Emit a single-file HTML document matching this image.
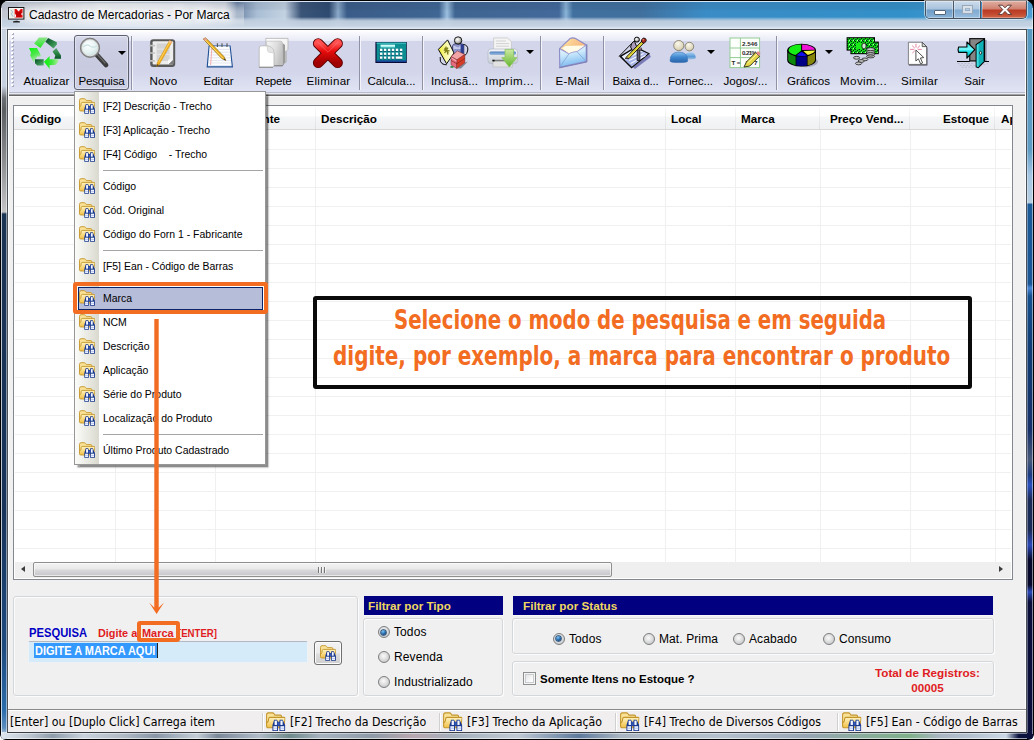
<!DOCTYPE html>
<html lang="pt-BR">
<head>
<meta charset="utf-8">
<title>Cadastro de Mercadorias - Por Marca</title>
<style>
*,*::before,*::after{box-sizing:border-box;margin:0;padding:0}
html,body{width:1034px;height:740px;overflow:hidden;background:#fff}
body{position:relative;font-family:"Liberation Sans",sans-serif;font-size:12px;color:#000}
.abs{position:absolute}
/* ---------- window frame ---------- */
#frame{position:absolute;left:0;top:0;width:1034px;height:740px;border-radius:8px 8px 6px 6px;background:#000;overflow:hidden}
#glass{position:absolute;left:1px;top:1px;right:1px;bottom:1px;border-radius:7px 7px 5px 5px;
 background:linear-gradient(90deg,#c2c7d2 0,#c9ced8 60px,#ccd2dc 224px,#6a82a4 236px,#a9bed4 256px,#c3d2e2 284px,#3a5478 300px,#2e4a70 328px,#8aa8c8 337px,#3a5c88 346px,#3f6694 438px,#9cc0e0 446px,#3f6592 454px,#42699a 558px,#8ab4d8 565px,#41709f 572px,#40709e 640px,#3a8cc6 705px,#3390c8 900px,#4d9fd6 1032px)}
#glasstop{position:absolute;left:1px;top:1px;right:1px;height:28px;border-radius:7px 7px 0 0;
 background:linear-gradient(180deg,rgba(225,236,248,.95) 0,rgba(225,236,248,.95) 1px,rgba(30,40,60,.1) 1px,rgba(30,40,60,.07) 8px,rgba(255,255,255,0) 10px,rgba(255,255,255,0) 16px,rgba(200,214,230,.55) 18px,rgba(194,208,224,.95) 20px,rgba(200,213,228,.97) 25px,rgba(226,235,245,1) 28px)}
#lframe{position:absolute;left:1px;top:30px;width:7px;bottom:1px;
 background:linear-gradient(180deg,#c9d2e1 0,#c6d0e0 56px,#9ea4ae 62px,#6c7076 68px,#5a5d62 80px,#8a8c90 130px,#c4c4c6 182px,#1a3454 184px,#17335a 480px,#1d4b80 620px,#2a6cab 680px,#5e8fbe 698px,#c9d6e4 706px)}
#rframe{position:absolute;right:1px;top:30px;width:7px;bottom:1px;
 background:linear-gradient(180deg,#5a9ac0 0,#5f9cc4 120px,#a4c6e4 145px,#b6cee0 173px,#1a5a98 174px,#1b5596 254px,#4a88d8 258px,#15508f 266px,#103c74 320px,#16306a 400px,#47587a 430px,#1a3a80 445px,#2a50c0 455px,#1a2a58 470px,#1a2a58 500px,#2a48b8 515px,#05082a 530px,#05082a 555px,#2a48b8 562px,#0a0e3a 572px,#0a0e3a 705px)}
#bframe{position:absolute;left:1px;right:1px;bottom:1px;height:7px;border-radius:0 0 5px 5px;
 background:linear-gradient(90deg,#dfe6ee 0,#b9c3cd 3%,#8e9caa 5%,#c9d3dd 8%,#aeb9c4 12%,#8896a6 15%,#c4ced8 19%,#7a8898 21%,#b0bcc8 25%,#6f8a8c 28%,#a8b4c0 31%,#8f9aa8 36%,#b8a8b0 40%,#a4b0bc 44%,#c0cad4 50%,#5f7a9c 56%,#a9b5c1 60%,#b5c1cd 70%,#98a6b4 78%,#7fb08a 88%,#aab6c2 91%,#b4c2d0 94%,#cbd8e6 97.4%,#0d1440 98.6%,#0a0e3a 100%)}
.hl{position:absolute;background:rgba(255,255,255,.75)}
#client{position:absolute;left:8px;top:30px;width:1018px;height:702px;background:#f0f0f0;box-shadow:inset 1px 0 0 #fbfcff,inset -1px 0 0 #fbfcff}
#cborder{position:absolute;left:7px;top:29px;width:1020px;height:704px;border:1px solid #4b5057;border-bottom-color:#3b3f46}
/* ---------- title bar ---------- */
#title{position:absolute;left:29px;top:7px;font-size:12px;line-height:16px;white-space:nowrap;color:#000;text-shadow:0 0 5px #fff,0 0 9px #fff,0 0 13px #fff,0 0 16px rgba(255,255,255,.9)}
#thaze{position:absolute;left:18px;top:3px;width:226px;height:24px;background:radial-gradient(ellipse at 50% 50%,rgba(255,255,255,.7) 0,rgba(255,255,255,.5) 60%,rgba(255,255,255,0) 100%)}
#capbtns{position:absolute;left:925px;top:1px;width:102px;height:18px;border:1px solid #46505e;border-top:none;border-radius:0 0 5px 5px;overflow:hidden;box-shadow:0 0 0 1px rgba(255,255,255,.55)}
#capbtns div{position:absolute;top:0;height:17px}
/* ---------- toolbar ---------- */
#toolbar{position:absolute;left:8px;top:30px;width:1018px;height:67px;border-left:1px solid #fff;border-right:1px solid #fff;background:linear-gradient(180deg,#fff 0,#fff 1px,#fbfbfe 2px,#e7e9f5 11px,#d3d6ea 11px,#d3d6ea 42px,#dfe3f3 61px,#dfe3f3 62px,#b9bccb 62px,#b9bccb 63px,#e6e8f2 63px,#e6e8f2 64px,#a2a2a4 64px,#a2a2a4 65px,#666 65px,#666 66px,#fafafa 66px,#fafafa 67px)}
.ic{position:absolute;width:32px;height:32px;overflow:visible}
.tl{position:absolute;top:73px;width:55px;text-align:center;font-size:11.6px;line-height:16px;white-space:nowrap;color:#000}
.dda{position:absolute;width:0;height:0;margin-left:-.5px;border-left:4px solid transparent;border-right:4px solid transparent;border-top:4.5px solid #000}
.tsep{position:absolute;top:36px;width:2px;height:54px;border-left:1px solid #8f92a4;border-right:1px solid #f4f4fa}
#tbgrip{position:absolute;left:12px;top:33px;width:3px;height:56px;background:
 linear-gradient(#a5a8b8,#a5a8b8) 0 0/2px 2px repeat-y,linear-gradient(#fff,#fff) 1px 1px/2px 2px repeat-y;background-size:2px 4px,2px 4px;
 background-image:repeating-linear-gradient(180deg,#a9acbc 0,#a9acbc 2px,transparent 2px,transparent 4px);}
#tbgrip::after{content:"";position:absolute;left:-1px;top:-1px;width:2px;height:56px;background-image:repeating-linear-gradient(180deg,#fff 0,#fff 2px,transparent 2px,transparent 4px)}
#pesqbtn{position:absolute;left:74px;top:35px;width:55px;height:55px;border:1px solid #5d6070;border-radius:3px;background:linear-gradient(180deg,#d9dbeb 0,#cdd0e4 6px,#c8cbe0 30px,#cfd2e6 53px);box-shadow:inset 0 0 0 1px rgba(255,255,255,.35)}
/* ---------- grid ---------- */
#grid{position:absolute;left:13px;top:105px;width:1000px;height:475px;border:1px solid #828790;background:#fff;overflow:hidden}
#ghead{position:absolute;left:0;top:0;width:997px;height:24px;background:linear-gradient(180deg,#fff 0,#fff 10px,#f5f6f7 11px,#f0f1f2 23px);border-bottom:1px solid #d8d8d8}
#ghead b{position:absolute;top:6px;font-size:11.7px;line-height:14px;white-space:nowrap}
#ghead u{position:absolute;top:0;width:1px;height:23px;background:linear-gradient(180deg,#fbfbfb,#dedfe1)}
#rows{position:absolute;left:1px;top:24px;width:996px;height:432px;background:
 repeating-linear-gradient(180deg,transparent 0,transparent 18px,#f0f0f0 18px,#f0f0f0 19px) 0 1px}
#rows u{position:absolute;top:0;width:1px;height:432px;background:#f0f0f0}
#hscroll{position:absolute;left:1px;top:456px;width:996px;height:16px;background:#efefef}
#thumb{position:absolute;left:18px;top:0;width:579px;height:15px;border:1px solid #8f8f8f;border-radius:2px;background:linear-gradient(180deg,#f3f3f3 0,#e9e9ea 6px,#d9d9dc 7px,#c6c6ca 13px);box-shadow:inset 0 0 0 1px rgba(255,255,255,.6)}
#thumb i{position:absolute;left:284px;top:4px;width:8px;height:6px;opacity:.8;background:linear-gradient(90deg,#5e5e5e 0,#5e5e5e 1px,#fafafa 1px,#fafafa 2px,transparent 2px,transparent 3px,#5e5e5e 3px,#5e5e5e 4px,#fafafa 4px,#fafafa 5px,transparent 5px,transparent 6px,#5e5e5e 6px,#5e5e5e 7px,#fafafa 7px,#fafafa 8px)}
#sleft{position:absolute;left:6px;top:4px;width:0;height:0;border-top:3.5px solid transparent;border-bottom:3.5px solid transparent;border-right:4.5px solid #3c3c3c}
#sright{position:absolute;left:984px;top:4px;width:0;height:0;border-top:3.5px solid transparent;border-bottom:3.5px solid transparent;border-left:4.5px solid #3c3c3c}
/* ---------- menu ---------- */
#menu{position:absolute;left:74px;top:91px;width:192px;height:374px;background:#fff;border:1px solid #979797;box-shadow:2.5px 2.5px 1.6px rgba(0,0,0,.45)}
#gut{position:absolute;left:0;top:0;width:24px;height:372px;background:linear-gradient(90deg,#fbfbf9,#ebebe5 50%,#d9d9cf)}
.mi{position:absolute;left:0;width:190px;height:24px;white-space:nowrap}
.mi span{position:absolute;left:28px;top:5px;font-size:11.7px;line-height:14px;transform:scaleX(.895);transform-origin:0 0;color:#000}
.mi svg{position:absolute;left:4px;top:4px;width:16px;height:16px;overflow:visible}
.mi.sel::before{content:"";position:absolute;left:3px;top:1px;width:185px;height:22.5px;background:#b6bdd8;border:1px solid #0a246a}
.msep{position:absolute;left:28px;width:160px;height:1px;background:#a5a5a5}
/* ---------- bottom panel ---------- */
.gb{position:absolute;border:1px solid #d4d7da;border-radius:3px;box-shadow:inset 1px 1px 0 #fcfcfc,1px 1px 0 #fcfcfc;background:#f0f0f0}
.nav{position:absolute;height:19px;background:#000080;color:#f0d860;font-weight:bold;font-size:11.7px;line-height:20px;padding-left:4.5px;white-space:nowrap;box-shadow:0 1px 0 rgba(255,255,255,.5)}
.radio{position:absolute;width:12px;height:12px;border-radius:50%;border:1px solid #7c7e80;background:radial-gradient(circle at 45% 40%,#fafafa 0,#e2e2e2 40%,#b4b8bc 100%)}
.radio.on::after{content:"";position:absolute;left:2.5px;top:2.5px;width:5px;height:5px;border-radius:50%;background:radial-gradient(circle at 40% 32%,#7cc6f4,#17589c 60%,#0a2c52);box-shadow:0 0 0 .7px #163f6e}
.rl{position:absolute;font-size:12px;line-height:16px;white-space:nowrap;letter-spacing:.1px}
.lbl{position:absolute;line-height:14px;white-space:nowrap}
.sx{transform-origin:0 0}
#inp{position:absolute;left:28px;top:640.5px;width:279.5px;height:22.5px;background:#d6ebfa;border:1px solid #eef1f6;border-top-color:#b4b8c0;border-radius:2px}
#inp i{position:absolute;left:5px;top:1px;width:124px;height:15px;background:#3399ff;border-right:1px solid #222}
#inp span{position:absolute;left:6px;top:2px;color:#fff;font-weight:bold;font-size:12px;line-height:15px;white-space:nowrap;transform:scaleX(.915);transform-origin:0 0}
#sbtn{position:absolute;left:314px;top:641px;width:28px;height:24px;border:1px solid #707070;border-radius:3px;background:linear-gradient(180deg,#f2f2f2 0,#ebebeb 11px,#dddddd 12px,#cfcfcf 22px);box-shadow:inset 0 0 0 1px #fcfcfc}
#sbtn svg{position:absolute;left:5px;top:3px;width:16px;height:16px;overflow:visible}
#chk{position:absolute;left:523px;top:672px;width:13px;height:13px;border:1px solid #8e8f8f;background:linear-gradient(135deg,#dcdcdc,#fdfdfd 70%);box-shadow:inset 0 0 0 1px #f4f4f4, inset 0 0 0 2px #c9ccd0}
/* ---------- status bar ---------- */
#status{position:absolute;left:8px;top:709px;width:1018px;height:23px;background:#f0eeee;border-top:1px solid #8a8a8a;box-shadow:inset 0 1px 0 #fff;font-family:"DejaVu Sans Condensed","DejaVu Sans","Liberation Sans",sans-serif;font-size:12.25px}
#status span{position:absolute;top:4px;line-height:16px;white-space:nowrap}
#status u{position:absolute;top:3px;width:2px;height:18px;margin-left:1px;border-left:1px solid #d0d0d0;border-right:1px solid #fff}
#status svg{position:absolute;top:2px;width:19.4px;height:19.4px;margin-left:-.5px;overflow:visible}
/* ---------- annotations ---------- */
.or{position:absolute;border:4px solid #f26c22;border-radius:3px}
#callout{position:absolute;left:313px;top:296px;width:659px;height:93px;border:4px solid #0a0a0a;border-radius:3px}
.ct{position:absolute;color:#f26c22;font-family:"DejaVu Sans Condensed","DejaVu Sans","Liberation Sans",sans-serif;font-weight:bold;font-size:26.5px;line-height:30px;white-space:nowrap;transform-origin:0 0}
</style>
</head>
<body>

<div class="abs" style="left:0;top:0;width:10px;height:10px;background:#000"></div><div class="abs" style="right:0;top:0;width:10px;height:10px;background:#000"></div>
<div id="frame">
  <div id="glass"></div>
  <div id="glasstop"></div>
  <div id="lframe"></div>
  <div id="rframe"></div>
  <div id="bframe"></div>
  <div class="hl" style="left:1px;top:8px;width:1px;bottom:6px;background:rgba(255,255,255,.72)"></div>
  <div class="hl" style="left:6px;top:30px;width:1px;bottom:7px;background:rgba(255,255,255,.5)"></div>
  <div class="hl" style="right:1px;top:8px;width:1px;bottom:6px;background:rgba(255,255,255,.5)"></div>
  <div class="hl" style="right:6px;top:30px;width:1px;bottom:7px;background:rgba(255,255,255,.35)"></div>
  <div class="hl" style="left:7px;right:7px;bottom:1px;height:1px;background:rgba(255,255,255,.6)"></div>
  <div class="hl" style="left:7px;right:7px;bottom:6px;height:1px;background:rgba(255,255,255,.45)"></div>
</div>
<div id="cborder"></div>
<div id="client"></div>

<!-- title -->
<div id="thaze"></div>
<div id="title">Cadastro de Mercadorias - Por Marca</div>

<!-- toolbar -->
<div id="toolbar"></div>
<div id="tbgrip"></div>
<div id="pesqbtn"></div>
<div class="tsep" style="left:131px"></div>
<div class="tsep" style="left:359px"></div>
<div class="tsep" style="left:422px"></div>
<div class="tsep" style="left:540px"></div>
<div class="tsep" style="left:603px"></div>
<div class="tsep" style="left:776px"></div>
<div class="tl" style="left:19px;letter-spacing:0.1px">Atualizar</div>
<div class="tl" style="left:74px;letter-spacing:-0.21px">Pesquisa</div>
<div class="tl" style="left:136px;letter-spacing:0.28px">Novo</div>
<div class="tl" style="left:191px;letter-spacing:-0.05px">Editar</div>
<div class="tl" style="left:246px;letter-spacing:-0.23px">Repete</div>
<div class="tl" style="left:301px;letter-spacing:0.27px">Eliminar</div>
<div class="tl" style="left:364px;letter-spacing:-0.03px">Calcula...</div>
<div class="tl" style="left:427px;letter-spacing:0.06px">Inclusã...</div>
<div class="tl" style="left:482px;letter-spacing:0.44px">Imprim...</div>
<div class="tl" style="left:545px;letter-spacing:0.19px">E-Mail</div>
<div class="tl" style="left:608px;letter-spacing:-0.23px">Baixa d...</div>
<div class="tl" style="left:663px;letter-spacing:-0.08px">Fornec...</div>
<div class="tl" style="left:718px;letter-spacing:0.02px">Jogos/...</div>
<div class="tl" style="left:781px;letter-spacing:-0.02px">Gráficos</div>
<div class="tl" style="left:836px;letter-spacing:0.4px">Movim...</div>
<div class="tl" style="left:892px;letter-spacing:0.22px">Similar</div>
<div class="tl" style="left:947px;letter-spacing:-0.03px">Sair</div>
<div class="dda" style="left:118px;top:51px"></div>
<div class="dda" style="left:526px;top:50px"></div>
<div class="dda" style="left:707px;top:50px"></div>
<div class="dda" style="left:825px;top:50px"></div>

<!-- Atualizar: recycle -->
<svg class="ic" style="left:29px;top:37px" viewBox="0 0 32 32">
 <defs>
  <linearGradient id="rg1" x1="0" y1="0" x2="0" y2="1"><stop offset="0" stop-color="#8fe48a"/><stop offset="1" stop-color="#1fe81f"/></linearGradient>
  <linearGradient id="rg2" x1="0" y1="0" x2="1" y2="1"><stop offset="0" stop-color="#06402a"/><stop offset=".6" stop-color="#2f8a48"/><stop offset="1" stop-color="#63ad84"/></linearGradient>
  <linearGradient id="rg3" x1="0" y1="0" x2="0" y2="1"><stop offset="0" stop-color="#5aa87c"/><stop offset=".5" stop-color="#2a8440"/><stop offset="1" stop-color="#08522a"/></linearGradient>
  <linearGradient id="rg4" x1="0" y1="0" x2=".4" y2="1"><stop offset="0" stop-color="#0cf20c"/><stop offset=".55" stop-color="#52e652"/><stop offset="1" stop-color="#b4ecae"/></linearGradient>
  <linearGradient id="rg5" x1="0" y1="0" x2="1" y2="1"><stop offset="0" stop-color="#0a4a2c"/><stop offset=".55" stop-color="#2f8a48"/><stop offset="1" stop-color="#5fae80"/></linearGradient>
  <linearGradient id="rg6" x1="0" y1="0" x2="1" y2="0"><stop offset="0" stop-color="#08f208"/><stop offset=".5" stop-color="#3fe83f"/><stop offset="1" stop-color="#b8eaa8"/></linearGradient>
 </defs>
 <path d="M9.9 0.4 L18.6 0.4 L16 4.8 L11.4 10.9 L5.2 6.5 Z" fill="url(#rg1)"/>
 <path d="M19.1 0.9 L27.8 5.2 L27.8 7.4 L24.5 11.6 L16.3 4.7 Z" fill="url(#rg2)"/>
 <path d="M27.3 11.1 L32 18.6 L32 21.7 L25.3 21.7 L26.3 18.6 L23.5 14.5 Z" fill="url(#rg3)"/>
 <path d="M0 11.1 L8 11.1 L11.7 18 L11.7 19.6 L8.4 19.6 L6.6 22 L4.6 25.4 L1.2 18.6 L2 15.4 Z" fill="url(#rg4)"/>
 <path d="M6 22.2 L14.7 22.2 L14.7 28.6 L8.3 28.6 L6 26.3 Z" fill="url(#rg5)"/>
 <path d="M15 24.7 L20.6 19.1 L20.6 22.2 L29.9 22.2 Q29.4 25.6 26.8 27.8 L20.6 28.3 L20.6 31.9 Z" fill="url(#rg6)"/>
</svg>

<!-- Pesquisa: magnifier -->
<svg class="ic" style="left:78px;top:37px" viewBox="0 0 32 32">
 <defs><radialGradient id="lens" cx=".4" cy=".35" r=".7"><stop offset="0" stop-color="#ffffff"/><stop offset=".6" stop-color="#e4f1f1"/><stop offset="1" stop-color="#c3dadb"/></radialGradient></defs>
 <path d="M18.5 17.5 L28 28" stroke="#3b3b3b" stroke-width="4.8" stroke-linecap="round"/>
 <path d="M19 17 L27 26" stroke="#6a6a6a" stroke-width="1.2" stroke-linecap="round"/>
 <circle cx="12" cy="10.8" r="9" fill="url(#lens)" stroke="#9a9a9a" stroke-width="2"/>
 <circle cx="12" cy="10.8" r="9.6" fill="none" stroke="#6d6d6d" stroke-width=".7"/>
 <circle cx="12" cy="10.8" r="8" fill="none" stroke="#e6e6e6" stroke-width=".9"/>
 <path d="M5 10 Q9 6.5 12 9 T19 9" stroke="#cfe3e4" stroke-width="1.4" fill="none"/>
</svg>

<!-- Novo: notebook + pencil -->
<svg class="ic" style="left:147px;top:37px" viewBox="0 0 32 32">
 <rect x="3.2" y="2.2" width="25" height="27.8" rx="3" fill="#595959"/>
 <rect x="5.6" y="4.2" width="20.6" height="23.4" rx="1" fill="#ededed"/>
 <rect x="9.6" y="6.4" width="13" height="17.6" fill="#d4d4d4"/>
 <g fill="#e6e6e6"><rect x="9.6" y="11.6" width="13" height="1"/><rect x="9.6" y="16.8" width="13" height="1"/></g>
 <path d="M26.2 22.4 L26.2 27.6 L21 27.6 Z" fill="#7e7e7e"/>
 <path d="M21 27.6 L21 23.6 Q21 22.4 22.2 22.4 L26.2 22.4 Z" fill="#fafafa"/>
 <g fill="none" stroke="#c4c4c4" stroke-width="1.7" stroke-linecap="round"><path d="M7.4 8.6 H2.8"/><path d="M7.4 16 H2.8"/><path d="M7.4 23.8 H2.8"/></g>
 <path d="M22.6 3.4 L25 4.8 L12.6 27 L9.8 29.6 L10.2 25.6 Z" fill="#f4b01c" stroke="#c98a10" stroke-width=".5"/>
 <path d="M22.6 3.4 L25 4.8 L24 6.6 L21.6 5.2 Z" fill="#f5b5a0"/>
 <path d="M9.8 29.6 L10.1 27.3 L11.6 28.1 Z" fill="#4a3a20"/>
 <path d="M11.8 24.8 L23.2 4.4" stroke="#fbd567" stroke-width=".9"/>
</svg>

<!-- Editar: notepad + pencil -->
<svg class="ic" style="left:202px;top:37px" viewBox="0 0 32 32">
 <path d="M6.6 8.6 L28.6 8.6 L31 30.6 L4.6 30.6 Z" fill="#1d4f94"/>
 <path d="M7.6 9.2 L27.6 9.2 L29.6 28 L6 28 Z" fill="#fdfdfe"/>
 <path d="M6 28 L29.6 28 L29.8 29.2 L5.8 29.2 Z" fill="#dfe8f4"/>
 <g stroke="#d3dbea" stroke-width=".7"><path d="M7.4 12.4 H28"/><path d="M7.2 15.2 H28.2"/><path d="M7 18 H28.6"/><path d="M6.8 20.8 H28.8"/><path d="M6.6 23.6 H29"/><path d="M6.4 26 H29.2"/></g>
 <path d="M10 9.2 L8.6 28" stroke="#f29a9a" stroke-width=".8"/>
 <g stroke="#555" stroke-width="1.1" fill="none"><path d="M15.4 10 V6.2"/><path d="M20 10 V6.2"/><path d="M25 10 V6.2"/></g>
 <path d="M1.2 2 L3.6 0.8 L21.8 19.4 L23.8 23.4 L19.8 21.6 Z" fill="#f2b21e" stroke="#8a6a18" stroke-width=".7"/>
 <path d="M1.2 2 L3.6 0.8 L5.4 2.8 L3 4 Z" fill="#e6a08c"/>
 <path d="M23.8 23.4 L21.6 22.6 L22.8 21.4 Z" fill="#333"/>
 <path d="M3.4 3.2 L20.8 21" stroke="#fbdc7a" stroke-width=".9"/>
</svg>

<!-- Repete: pages -->
<svg class="ic" style="left:257px;top:37px" viewBox="0 0 32 32">
 <defs>
  <linearGradient id="pg1" x1="0" y1="0" x2="1" y2="1"><stop offset="0" stop-color="#ffffff"/><stop offset=".6" stop-color="#f2f2f2"/><stop offset="1" stop-color="#d4d4d4"/></linearGradient>
  <linearGradient id="pg2" x1="0" y1="0" x2="1" y2=".4"><stop offset="0" stop-color="#f6f6f6"/><stop offset=".6" stop-color="#dedede"/><stop offset="1" stop-color="#c2c2c2"/></linearGradient>
 </defs>
 <path d="M8.8 1.4 L31 1.4 L31 12.4 L29.4 14.4 L29.4 25 L26 27 L8.8 27 Z" fill="url(#pg1)" stroke="#b4b4b4" stroke-width=".8"/>
 <path d="M25.4 6 L28 8 L28 25.6 L25.4 28.6 Z" fill="#9a9a9a"/>
 <path d="M29.4 14.4 L29.4 25 L28 25.8 L28 13.6 Z" fill="#bdbdbd"/>
 <path d="M9.6 4.2 L23.6 4.2 Q25.4 4.2 25.4 6 L25.4 28.6 L9.6 28.6 Z" fill="url(#pg2)" stroke="#bcbcbc" stroke-width=".7"/>
 <path d="M9.6 28.8 L25.4 28.8 L26.4 27.6" fill="none" stroke="#6e6e6e" stroke-width=".9"/>
 <path d="M2.2 11 Q2.2 8.8 4.4 8.8 L10 8.8 Q16.6 9.4 17 16 L17 28.4 Q17 30 15.4 30 L2.2 30 Z" fill="#ffffff" stroke="#b2b2b2" stroke-width=".8"/>
 <path d="M10 8.8 Q16.6 9.4 17 16 L12.4 15.4 Q10.4 15 10.4 13 Z" fill="#e4e4e4" stroke="#c2c2c2" stroke-width=".5"/>
 <path d="M2 30.4 H16" stroke="#8a8a8a" stroke-width=".9"/>
</svg>

<!-- Eliminar: red X -->
<svg class="ic" style="left:312px;top:37px" viewBox="0 0 32 32">
 <defs><linearGradient id="rx" x1="0" y1="0" x2="0" y2="1"><stop offset="0" stop-color="#ff5050"/><stop offset=".4" stop-color="#e80c0c"/><stop offset="1" stop-color="#a00000"/></linearGradient></defs>
 <path d="M6.2 6.5 L25.6 25.8 M25.6 6.5 L6.2 25.8" stroke="#5a0000" stroke-width="10.6" stroke-linecap="round" fill="none"/>
 <path d="M6.2 6.5 L25.6 25.8 M25.6 6.5 L6.2 25.8" stroke="url(#rx)" stroke-width="8.8" stroke-linecap="round" fill="none"/>
 <path d="M5.4 4.8 L16 15.2 L26.4 4.8" fill="none" stroke="#ff8c8c" stroke-width="1" stroke-linecap="round" opacity=".45"/>
</svg>

<!-- Calcula: calculator -->
<svg class="ic" style="left:375px;top:37px" viewBox="0 0 32 32">
 <rect x="0.4" y="5" width="31.4" height="21" fill="#0a0a3a"/>
 <rect x="1.6" y="5.6" width="29.6" height="19" fill="#0b8f92"/>
 <rect x="1.6" y="5.6" width="29.6" height="1.2" fill="#3fc0c0"/>
 <rect x="1.6" y="23.4" width="29.6" height="1.4" fill="#1c3c9a"/>
 <rect x="5.6" y="7.8" width="14.4" height="2.6" fill="#a6f0ee"/>
 <rect x="5.6" y="7.8" width="14.4" height=".9" fill="#e6ffff"/>
 <g fill="#06305a">
  <rect x="4.5" y="12.1" width="2.5" height="2.4"/><rect x="8.4" y="12.1" width="2.5" height="2.4"/><rect x="12.4" y="12.1" width="2.5" height="2.4"/><rect x="16.3" y="12.1" width="2.5" height="2.4"/><rect x="20.3" y="12.1" width="2.5" height="2.4"/><rect x="24.4" y="12.1" width="2.5" height="2.4"/>
  <rect x="4.5" y="16" width="2.5" height="2.4"/><rect x="8.4" y="16" width="2.5" height="2.4"/><rect x="12.4" y="16" width="2.5" height="2.4"/><rect x="16.3" y="16" width="2.5" height="2.4"/><rect x="20.3" y="16" width="2.5" height="2.4"/><rect x="24.4" y="16" width="2.5" height="2.4"/>
  <rect x="4.5" y="19.9" width="2.5" height="2.4"/><rect x="8.4" y="19.9" width="2.5" height="2.4"/><rect x="12.4" y="19.9" width="2.5" height="2.4"/><rect x="16.3" y="19.9" width="2.5" height="2.4"/><rect x="20.3" y="19.9" width="6.6" height="2.4"/>
 </g>
 <g fill="#ffffff">
  <rect x="4.9" y="11.7" width="2.5" height="2.3"/><rect x="8.8" y="11.7" width="2.5" height="2.3"/><rect x="12.8" y="11.7" width="2.5" height="2.3"/><rect x="16.7" y="11.7" width="2.5" height="2.3"/><rect x="20.7" y="11.7" width="2.5" height="2.3"/><rect x="24.8" y="11.7" width="2.5" height="2.3"/>
  <rect x="4.9" y="15.6" width="2.5" height="2.3"/><rect x="8.8" y="15.6" width="2.5" height="2.3"/><rect x="12.8" y="15.6" width="2.5" height="2.3"/><rect x="16.7" y="15.6" width="2.5" height="2.3"/><rect x="20.7" y="15.6" width="2.5" height="2.3"/><rect x="24.8" y="15.6" width="2.5" height="2.3"/>
  <rect x="4.9" y="19.5" width="2.5" height="2.3"/><rect x="8.8" y="19.5" width="2.5" height="2.3"/><rect x="12.8" y="19.5" width="2.5" height="2.3"/><rect x="16.7" y="19.5" width="2.5" height="2.3"/><rect x="20.7" y="19.5" width="6.6" height="2.3"/>
 </g>
</svg>
<!-- Inclusã: person + card + box -->
<svg class="ic" style="left:438px;top:37px" viewBox="0 0 32 32">
 <defs>
  <radialGradient id="hd" cx=".4" cy=".35" r=".7"><stop offset="0" stop-color="#ffffff"/><stop offset=".55" stop-color="#c4c4c0"/><stop offset="1" stop-color="#4e4e4e"/></radialGradient>
  <linearGradient id="cd" x1="0" y1="0" x2="1" y2="0"><stop offset="0" stop-color="#f0ee2a"/><stop offset=".45" stop-color="#f8f7a0"/><stop offset="1" stop-color="#fffff4"/></linearGradient>
 </defs>
 <path d="M18.6 31.4 L26.8 25.8 L30 24.6 L23 31.4 Z" fill="#858590"/>
 <path d="M24.8 7.3 Q30.4 8 29.8 13 Q29.2 17 26.8 18.6" fill="none" stroke="#0a0a0a" stroke-width="1"/>
 <path d="M14.5 9 Q15 7 17 6.8 L23.6 6.8 Q25.8 7 25.8 9 L25.8 18 L14.5 18 Z" fill="#8e94cc" stroke="#1c1c4c" stroke-width=".7"/>
 <path d="M22.6 6.9 Q25.8 7 25.8 9 L25.8 18 L22.6 18 Z" fill="#2c3c8e"/>
 <path d="M15.4 8.6 L20.4 10.6 L22.4 8.4 L22.4 12 L15.4 12 Z" fill="#c4c9ea"/>
 <circle cx="20.1" cy="3.5" r="3.7" fill="url(#hd)" stroke="#0a0a0a" stroke-width=".9"/>
 <path d="M2.2 20 Q1.6 25 4 26.6 Q6 27.8 8.8 27.8" fill="none" stroke="#0a0a0a" stroke-width="1"/>
 <path d="M9.6 2.9 L0.4 12.4 L8.6 26.8 L16 16 Z" fill="url(#cd)" stroke="#0a0a0a" stroke-width="1"/>
 <path d="M7.8 9.6 L10 17.6 M5.8 13 L11.6 13.8 M6.6 10.8 L10.4 16.4 M10 10.6 L6.6 16" stroke="#80801c" stroke-width="1.3"/>
 <path d="M19.4 13.9 L26.8 17.5 L18.9 22.9 L13 19.6 Z" fill="#f2a4a6" stroke="#7c2424" stroke-width=".5"/>
 <path d="M13 19.6 L18.9 22.9 L18.6 31.4 L13 27.8 Z" fill="#e46e80" stroke="#7c2424" stroke-width=".5"/>
 <path d="M18.9 22.9 L26.8 17.5 L26.8 25.8 L18.6 31.4 Z" fill="#d63c28" stroke="#7c2424" stroke-width=".5"/>
 <path d="M13 23.4 L18.8 26.8 L26.8 21.4" fill="none" stroke="#8c2420" stroke-width=".7"/>
 <path d="M13.4 21 L18.8 24.2" fill="none" stroke="#fbd0d0" stroke-width=".8"/>
 <rect x="12.4" y="29.2" width="3" height="1.5" fill="#1c7a2c"/>
</svg>

<!-- Imprim: printer -->
<svg class="ic" style="left:487px;top:37px" viewBox="0 0 32 32">
 <defs>
  <linearGradient id="pb" x1="0" y1="0" x2="0" y2="1"><stop offset="0" stop-color="#f4f6fa"/><stop offset="1" stop-color="#c6ccd6"/></linearGradient>
  <linearGradient id="ga" x1="0" y1="0" x2="0" y2="1"><stop offset="0" stop-color="#cdeaa2"/><stop offset="1" stop-color="#63b52f"/></linearGradient>
 </defs>
 <path d="M6.6 1 L20.6 1 L24.4 4.6 L24.4 14 L6.6 14 Z" fill="#f4f4f4" stroke="#c2c2c2" stroke-width=".7"/>
 <g stroke="#d2d2d2" stroke-width="1"><path d="M9 4 H19"/><path d="M9 6.6 H22"/><path d="M9 9.2 H22"/></g>
 <rect x="1" y="12" width="29.6" height="14.6" rx="3" fill="url(#pb)" stroke="#b0b6c2" stroke-width=".7"/>
 <rect x="2.6" y="14.4" width="26.4" height="3.2" rx="1.4" fill="#4f7fba"/>
 <rect x="2.6" y="15.6" width="26.4" height="1.2" fill="#86aede"/>
 <rect x="5" y="22.8" width="21.6" height="1.4" fill="#7a7a7a"/>
 <rect x="6" y="24.6" width="19.6" height="5.4" fill="#e2e2e2" stroke="#b6b6b6" stroke-width=".6"/>
 <rect x="5.6" y="22.8" width="2" height="1.6" fill="#111"/>
 <path d="M18 12.4 L26.6 12.4 L26.6 20.6 L30 20.6 L22.3 30 L14.8 20.6 L18 20.6 Z" fill="url(#ga)" stroke="#86c25a" stroke-width=".7"/>
</svg>

<!-- E-Mail: envelope -->
<svg class="ic" style="left:556px;top:37px" viewBox="0 0 32 32">
 <defs>
  <linearGradient id="ev" x1="0" y1="0" x2=".25" y2="1"><stop offset="0" stop-color="#f4fbff"/><stop offset=".45" stop-color="#cdeafc"/><stop offset="1" stop-color="#7fbcf0"/></linearGradient>
  <linearGradient id="ef" x1="0" y1="0" x2="1" y2=".3"><stop offset="0" stop-color="#ffe7a0"/><stop offset="1" stop-color="#f8b484"/></linearGradient>
 </defs>
 <path d="M3 11.6 L13.8 0.9 Q16.8 -0.5 19.8 0.9 L30.9 7.5 L30.9 25 L3.2 30.9 Z" fill="#8c8cc6"/>
 <path d="M4.4 11.4 L14.4 1.9 Q16.8 0.9 19.2 1.9 L29.4 8 L17 13.4 L12 15.6 Z" fill="url(#ef)"/>
 <path d="M5.8 11 L9.6 8.4 L26.6 8.2 L28.8 8.8 L21 14.2 Q17 14.6 12.8 16.6 Z" fill="#fffbe8"/>
 <path d="M6.2 10.8 L9.6 8.4 L26.6 8.2" fill="none" stroke="#eec27a" stroke-width=".6"/>
 <path d="M4.1 12.2 L12.6 16.8 Q16.6 14.8 21 14.6 L29.7 8.6 L29.7 24 L4.3 29.5 Z" fill="url(#ev)"/>
 <path d="M4.3 29.5 L12.9 16.9 M29.7 24 L21 14.7" stroke="#7f9cce" stroke-width=".7" fill="none"/>
 <path d="M4.1 12.2 L12.6 16.8 Q16.6 14.8 21 14.6 L29.7 8.6" stroke="#a2a0d4" stroke-width=".8" fill="none"/>
 <path d="M3.2 30.9 L30.9 25 L30.9 7.5" stroke="#7878b4" stroke-width=".9" fill="none"/>
</svg>

<!-- Baixa d...: figure w/ pencil over paper -->
<svg class="ic" style="left:618px;top:37px" viewBox="0 0 32 32">
 <defs><radialGradient id="bh" cx=".4" cy=".35" r=".7"><stop offset="0" stop-color="#ffffff"/><stop offset=".6" stop-color="#b8b8b8"/><stop offset="1" stop-color="#444"/></radialGradient></defs>
 <path d="M15 30.2 L31.6 17 L32.8 20 L17 32 Z" fill="#6a6aae" opacity=".85"/>
 <path d="M1.1 19.3 L17.6 9.6 L32 16.5 L13.5 31.4 Z" fill="#0c0c0c"/>
 <path d="M3.6 19.4 L17.6 11 L29.6 16.8 L13.8 29.4 Z" fill="#e9effd"/>
 <path d="M9 22 L24 14.4 L29.6 16.8 L13.8 29.4 L7 23 Z" fill="#a9b5e6"/>
 <path d="M11 23.6 L25.6 16.6 M12.6 26.4 L27.6 18.6" stroke="#f4f7ff" stroke-width="1.1"/>
 <path d="M1.1 19.3 L15.6 4.6" stroke="#0c0c0c" stroke-width="1"/>
 <path d="M12.6 10 Q13 5.4 16.4 4 L18.6 9.6 L14.6 14 Z" fill="#ab9bbd" stroke="#0c0c0c" stroke-width="1"/>
 <circle cx="18.9" cy="2.6" r="2.5" fill="url(#bh)" stroke="#0c0c0c" stroke-width="1"/>
 <rect x="19.1" y="12.4" width="2.8" height="11" fill="#5e5c76" stroke="#0c0c0c" stroke-width=".8"/>
 <rect x="17.8" y="11" width="5.6" height="1.9" fill="#d79ab0" stroke="#0c0c0c" stroke-width=".6"/>
 <path d="M8.8 19.6 L23.6 4.4 L25.6 6.2 L10.8 21.6 L7.6 21.4 Z" fill="#efe33a" stroke="#0c0c0c" stroke-width=".9"/>
 <path d="M10 19.8 L24.2 5.4" stroke="#6c6c1c" stroke-width=".6" stroke-dasharray="1 1"/>
 <path d="M7.4 21.6 L9 19.8 L10.6 21.4 Z" fill="#d8b08a" stroke="#0c0c0c" stroke-width=".5"/>
 <ellipse cx="25.8" cy="3.6" rx="2.3" ry="2.6" transform="rotate(40 25.8 3.6)" fill="#a8281c" stroke="#0c0c0c" stroke-width=".8"/>
 <circle cx="25.2" cy="2.8" r=".8" fill="#ee8a7a"/>
</svg>

<!-- Fornec: two people -->
<svg class="ic" style="left:667px;top:37px" viewBox="0 0 32 32">
 <defs>
  <radialGradient id="fh" cx=".4" cy=".3" r=".8"><stop offset="0" stop-color="#fbf8ea"/><stop offset=".7" stop-color="#ddd6bd"/><stop offset="1" stop-color="#a8a28c"/></radialGradient>
  <linearGradient id="fb" x1="0" y1="0" x2="0" y2="1"><stop offset="0" stop-color="#8cc0ee"/><stop offset=".5" stop-color="#3f87cf"/><stop offset="1" stop-color="#2a62a8"/></linearGradient>
  <linearGradient id="fb2" x1="0" y1="0" x2="0" y2="1"><stop offset="0" stop-color="#a8d0f2"/><stop offset=".6" stop-color="#5a9ad8"/><stop offset="1" stop-color="#9cbce0"/></linearGradient>
 </defs>
 <path d="M17 21.6 Q17.4 15.2 22.8 15.2 Q28.8 15.2 28.8 21 Q28.8 22.4 23 22.4 Z" fill="url(#fb2)"/>
 <circle cx="22.4" cy="9.6" r="4.3" fill="url(#fh)" stroke="#7c7662" stroke-width=".8"/>
 <path d="M3 24 Q3 15 11.8 15 Q20.8 15 20.8 24 Q20.8 25.6 11.8 25.6 Q3 25.6 3 24 Z" fill="url(#fb)" stroke="#2f6ab0" stroke-width=".5"/>
 <circle cx="11.8" cy="8.6" r="5.1" fill="url(#fh)" stroke="#7c7662" stroke-width=".8"/>
</svg>

<!-- Jogos: spreadsheet -->
<svg class="ic" style="left:729px;top:37px" viewBox="0 0 32 32">
 <rect x="1" y="1" width="29.6" height="29.6" fill="#fdfffd" stroke="#93cc93" stroke-width="1"/>
 <path d="M1 11 H30.6 M1 20.6 H30.6 M11.4 1 V30.6" stroke="#93cc93" stroke-width="1"/>
 <text x="13" y="8.6" font-family="Liberation Sans,sans-serif" font-size="6.2" font-weight="bold" fill="#2a2a2a" textLength="15.5">2.546</text>
 <text x="13" y="18.4" font-family="Liberation Sans,sans-serif" font-size="6.2" font-weight="bold" fill="#2a2a2a" textLength="15">0.21%</text>
 <text x="2.4" y="28" font-family="Liberation Sans,sans-serif" font-size="6.2" font-weight="bold" fill="#2a2a2a" textLength="26">T=  2.7</text>
 <path d="M15 30 L17.4 25 L26.6 15.6 L30.6 19.2 L20.8 29 Z" fill="#e6d84a" stroke="#3a3a22" stroke-width="1"/>
 <path d="M18.6 26 L28 17" stroke="#fdf6a8" stroke-width="1"/>
 <path d="M27 16 L28.6 14.6 Q30.6 14 31.4 16 L30.4 19 Z" fill="#e28a8a"/>
</svg>

<!-- Gráficos: pie -->
<svg class="ic" style="left:786px;top:37px" viewBox="0 0 32 32">
 <ellipse cx="19.4" cy="24.8" rx="12.6" ry="5.4" fill="#85859a" opacity=".6"/>
 <path d="M1.2 13.2 L1.2 23.2 A14.4 6.4 0 0 0 30 23.2 L30 13.2 Z" fill="#000"/>
 <path d="M2.2 15 L2.2 23 Q3 26.6 9.6 28.2 L9.6 19.4 Z" fill="#0c860c"/>
 <path d="M10.4 28.4 Q15.6 29.3 20.8 28.5 L20.8 19.6 L15.6 16.8 L10.4 19.6 Z" fill="#000086"/>
 <path d="M21.6 28.3 Q28.4 26.8 29 23 L29 15 L21.6 19.4 Z" fill="#86860c"/>
 <ellipse cx="15.6" cy="13.2" rx="14.4" ry="6.4" fill="#000"/>
 <path d="M15.1 13.7 L15.1 7.6 A13.4 5.6 0 0 0 9.5 18.1 Z" fill="#14ee14"/>
 <path d="M16.1 12.9 L16.1 7.6 A13.4 5.6 0 0 1 28.9 12.7 Z" fill="#f214d6"/>
 <path d="M17.4 14 L29 13.6 A13.4 5.6 0 0 1 21.8 18 Z" fill="#f2f240"/>
 <path d="M15.6 14.8 L21 18.4 A13.4 5.6 0 0 1 10.3 18.5 Z" fill="#1010ee"/>
</svg>

<!-- Movim: money -->
<svg class="ic" style="left:847px;top:37px" viewBox="0 0 32 32">
 <defs><pattern id="dth" width="4" height="4" patternUnits="userSpaceOnUse"><rect width="4" height="4" fill="#12e212"/><rect width="1" height="1" fill="#021"/><rect x="2" y="1" width="1" height="1" fill="#021"/><rect x="1" y="2" width="1" height="1" fill="#0a6a1a"/><rect x="3" y="3" width="1" height="1" fill="#021"/><rect x="2" y="3" width="1" height="1" fill="#aef0ae"/><rect x="0" y="2" width="1" height="1" fill="#043"/><rect x="3" y="0" width="1" height="1" fill="#0a8a2a"/></pattern></defs>
 <rect x="3.4" y="4.6" width="28.4" height="12.6" fill="#000"/>
 <rect x="-0.4" y="0.2" width="28.4" height="13.4" fill="#000"/>
 <rect x="4.4" y="5.6" width="26.4" height="10.6" fill="url(#dth)"/>
 <rect x="0.6" y="1.2" width="26.4" height="11.4" fill="url(#dth)"/>
 <rect x="9" y="6" width="7" height="6" fill="#19ee19"/>
 <ellipse cx="17" cy="9" rx="2.2" ry="3" fill="#cfeacf" stroke="#000" stroke-width=".8"/>
 <g fill="#c9c9c9" stroke="#1c1c1c" stroke-width=".8">
  <ellipse cx="23.6" cy="19.4" rx="4" ry="1.5"/><ellipse cx="23.6" cy="17.6" rx="4" ry="1.5"/><ellipse cx="23.6" cy="15.8" rx="4" ry="1.5"/><ellipse cx="23.6" cy="14" rx="4" ry="1.5"/><ellipse cx="23.6" cy="12.2" rx="4" ry="1.5"/>
  <ellipse cx="9.6" cy="20.8" rx="3.1" ry="1.4"/><ellipse cx="17.8" cy="22.4" rx="3.1" ry="1.4"/><ellipse cx="14.2" cy="24" rx="3.1" ry="1.4"/><ellipse cx="11.6" cy="26.4" rx="3.1" ry="1.4"/>
 </g>
</svg>

<!-- Similar: page + cursor -->
<svg class="ic" style="left:902px;top:37px" viewBox="0 0 32 32">
 <path d="M6.9 6 L20.6 6 L25.4 10.4 L25.4 28.4 L6.9 28.4 Z" fill="#3c3c4c"/>
 <path d="M6.4 5.3 L20.2 5.3 L24.6 9.6 L24.6 27.4 L6.4 27.4 Z" fill="#fefefe" stroke="#5a5a5a" stroke-width=".7"/>
 <path d="M20.2 5.3 L20.2 9.6 L24.6 9.6 Z" fill="#d9dcd4" stroke="#3a3a3a" stroke-width=".8"/>
 <g stroke="#d8557f" stroke-width=".7"><path d="M14 6.8 V10.6"/><path d="M8 12.4 H12.2"/><path d="M15.8 12.4 H19.8"/><path d="M10.2 8.6 L12.8 11.2"/><path d="M18 8.6 L15.4 11.2"/><path d="M10.4 16 L12.8 13.8"/></g>
 <path d="M13.9 13 L13.9 24 L16.4 21.8 L18.6 26.8 L20.6 25.9 L18.4 21 L21.8 20.6 Z" fill="#fff" stroke="#3e3e3e" stroke-width=".9" stroke-linejoin="round"/>
</svg>

<!-- Sair: door + arrow -->
<svg class="ic" style="left:957px;top:37px" viewBox="0 0 32 32">
 <defs><linearGradient id="sa" x1="0" y1="0" x2="0" y2="1"><stop offset="0" stop-color="#0fe0e6"/><stop offset=".45" stop-color="#7af6fa"/><stop offset=".55" stop-color="#1fe6ec"/><stop offset="1" stop-color="#0aa8ae"/></linearGradient></defs>
 <g stroke="#b4b6c8" stroke-width=".8" stroke-dasharray="2 1.4"><path d="M0.6 26.6 L17 26.6"/><path d="M2.6 28.4 L18 28.4"/><path d="M4.6 30.2 L17 30.2"/><path d="M23 28.4 L31 26.6"/></g>
 <rect x="28" y="3" width="1.8" height="21" fill="#9c9cb2"/>
 <rect x="12.2" y="1.1" width="15.9" height="23.4" fill="#000"/>
 <rect x="13.3" y="2.2" width="13.6" height="21.2" fill="#858585"/>
 <path d="M0 24.5 H12.8 M27.4 24.5 H32" stroke="#000" stroke-width="1.1"/>
 <path d="M27.6 1.3 L18.6 7.3 L18.6 30.2 L21.4 31.2 L27.6 25 Z" fill="#000"/>
 <path d="M26.6 3 L19.7 7.9 L19.7 29.4 L21.2 30 L26.6 24.6 Z" fill="#0fb0b6"/>
 <path d="M19.7 7.9 L21.6 6.6 L21.6 29.6 L21.2 30 L19.7 29.4 Z" fill="#3fdce2"/>
 <ellipse cx="23.6" cy="15.8" rx="1" ry="1.5" fill="#fff" stroke="#000" stroke-width=".7"/>
 <path d="M1.6 10 L9.9 10 L9.9 5 L17.8 12.7 L9.9 21.2 L9.9 15.4 L1.6 15.4 Q0.6 12.7 1.6 10 Z" fill="url(#sa)" stroke="#000" stroke-width="1.1" stroke-linejoin="round"/>
</svg>
<!-- grid -->
<div id="grid">
  <div id="ghead">
    <b style="left:7px">Código</b>
    <b style="left:107px">Cód. Original</b>
    <b style="left:207px">Fabricante</b>
    <b style="left:307px">Descrição</b>
    <b style="left:657px">Local</b>
    <b style="left:727px">Marca</b>
    <b style="left:816px">Preço Vend...</b>
    <b style="left:929px">Estoque</b>
    <b style="left:987px">Ap</b>
    <u style="left:101px"></u><u style="left:201px"></u><u style="left:301px"></u><u style="left:651px"></u><u style="left:721px"></u><u style="left:805px"></u><u style="left:895px"></u><u style="left:980px"></u>
  </div>
  <div id="rows">
    <u style="left:100px"></u><u style="left:200px"></u><u style="left:300px"></u><u style="left:650px"></u><u style="left:720px"></u><u style="left:805px"></u><u style="left:895px"></u><u style="left:980px"></u>
  </div>
  <div id="hscroll">
    <div id="sleft"></div><div id="thumb"><i></i></div><div id="sright"></div>
  </div>
</div>
<!-- dropdown menu -->
<svg width="0" height="0" style="position:absolute"><defs>
 <linearGradient id="fg" x1="0" y1="0" x2="0" y2="1"><stop offset="0" stop-color="#fff2c0"/><stop offset="1" stop-color="#f1c145"/></linearGradient>
 <symbol id="bino" viewBox="0 0 16 16">
  <path d="M0.5 2.4 Q0.5 0.7 2 0.7 L5.2 0.7 Q6.2 0.7 6.8 1.7 L7.4 2.6 L11.8 2.6 Q12.8 2.6 12.8 3.6 L12.8 5.4 L0.5 9 Z" fill="#f9e297" stroke="#c4962c" stroke-width=".9"/>
  <path d="M3.2 4.4 L15 4.4 Q16 4.4 15.8 5.4 L14.6 12 Q14.4 13 13.4 13 L1.8 13 Q0.5 13 0.5 11.8 L0.5 9 Q1.6 8.6 1.9 7.4 L2.2 5.4 Q2.4 4.4 3.2 4.4 Z" fill="url(#fg)" stroke="#c4962c" stroke-width=".9"/>
  <path d="M6.7 6.3 L9.1 6.3 L9.9 8 L11 8 L11.3 6.3 L13.7 6.3 L15.9 11 L15.9 15.7 L11.1 15.7 L11.1 11.8 L9.9 11.8 L9.9 15.7 L5.3 15.7 L5.3 11 Z" fill="#1c3a90"/>
  <rect x="7.1" y="7.1" width="1.9" height="3.6" fill="#f4f8ff"/><rect x="11.9" y="7.1" width="1.8" height="3.6" fill="#f4f8ff"/>
  <rect x="6.1" y="11.7" width="3" height="3.3" fill="#eef3ff"/><rect x="11.9" y="11.7" width="3.1" height="3.3" fill="#eef3ff"/>
  <rect x="6.1" y="13" width="3" height=".7" fill="#a9bdf0"/><rect x="11.9" y="13" width="3.1" height=".7" fill="#a9bdf0"/>
  <rect x="9.5" y="8.4" width="1.8" height="2.6" fill="#3557b5"/>
 </symbol>
</defs></svg>
<div id="menu"><div id="gut"></div>
<div class="mi" style="top:2px"><svg viewBox="0 0 16 16"><use href="#bino"/></svg><span>[F2] Descrição - Trecho</span></div>
<div class="mi" style="top:26px"><svg viewBox="0 0 16 16"><use href="#bino"/></svg><span>[F3] Aplicação - Trecho</span></div>
<div class="mi" style="top:50px"><svg viewBox="0 0 16 16"><use href="#bino"/></svg><span>[F4] Código    - Trecho</span></div>
<div class="msep" style="top:78px"></div>
<div class="mi" style="top:82px"><svg viewBox="0 0 16 16"><use href="#bino"/></svg><span>Código</span></div>
<div class="mi" style="top:106px"><svg viewBox="0 0 16 16"><use href="#bino"/></svg><span>Cód. Original</span></div>
<div class="mi" style="top:130px"><svg viewBox="0 0 16 16"><use href="#bino"/></svg><span>Código do Forn 1 - Fabricante</span></div>
<div class="msep" style="top:158px"></div>
<div class="mi" style="top:162px"><svg viewBox="0 0 16 16"><use href="#bino"/></svg><span>[F5] Ean - Código de Barras</span></div>
<div class="msep" style="top:190px"></div>
<div class="mi sel" style="top:194px"><svg viewBox="0 0 16 16"><use href="#bino"/></svg><span>Marca</span></div>
<div class="mi" style="top:218px"><svg viewBox="0 0 16 16"><use href="#bino"/></svg><span>NCM</span></div>
<div class="mi" style="top:242px"><svg viewBox="0 0 16 16"><use href="#bino"/></svg><span>Descrição</span></div>
<div class="mi" style="top:266px"><svg viewBox="0 0 16 16"><use href="#bino"/></svg><span>Aplicação</span></div>
<div class="mi" style="top:290px"><svg viewBox="0 0 16 16"><use href="#bino"/></svg><span>Série do Produto</span></div>
<div class="mi" style="top:314px"><svg viewBox="0 0 16 16"><use href="#bino"/></svg><span>Localização do Produto</span></div>
<div class="msep" style="top:342px"></div>
<div class="mi" style="top:346px"><svg viewBox="0 0 16 16"><use href="#bino"/></svg><span>Último Produto Cadastrado</span></div>
</div>
<!-- bottom panel -->
<div class="gb" style="left:13px;top:596px;width:345px;height:100px"></div>
<div class="lbl sx" style="left:28.5px;top:626px;color:#0000c4;font-weight:bold;font-size:12px;transform:scaleX(.935)">PESQUISA</div>
<div class="lbl sx" style="left:98.2px;top:626px;color:#e11b22;font-weight:bold;font-size:11.6px;transform:scaleX(.936)">Digite a</div>
<div class="lbl sx" style="left:141.8px;top:626px;color:#e11b22;font-weight:bold;font-size:11.6px;transform:scaleX(.943)">Marca</div>
<div class="lbl sx" style="left:178.3px;top:626px;color:#e11b22;font-weight:bold;font-size:11.6px;transform:scaleX(.83)">[ENTER]</div>
<div id="inp"><i></i><span>DIGITE A MARCA AQUI</span></div>
<div id="sbtn"><svg viewBox="0 0 16 16"><use href="#bino"/></svg></div>

<div class="nav" style="left:363.5px;top:595.5px;width:139px">Filtrar por Tipo</div>
<div class="gb" style="left:363px;top:618px;width:140px;height:78px"></div>
<div class="radio on" style="left:377.5px;top:626px"></div><div class="rl" style="left:394px;top:624px">Todos</div>
<div class="radio" style="left:377.5px;top:650.5px"></div><div class="rl" style="left:394px;top:649px">Revenda</div>
<div class="radio" style="left:377.5px;top:675.5px"></div><div class="rl" style="left:394px;top:674px">Industrializado</div>

<div class="nav" style="left:512.5px;top:595.5px;width:480px;padding-left:10.5px">Filtrar por Status</div>
<div class="gb" style="left:512px;top:618px;width:482px;height:36px"></div>
<div class="radio on" style="left:552.5px;top:632.5px"></div><div class="rl" style="left:569px;top:631px">Todos</div>
<div class="radio" style="left:642.5px;top:632.5px"></div><div class="rl" style="left:659px;top:631px">Mat. Prima</div>
<div class="radio" style="left:732.5px;top:632.5px"></div><div class="rl" style="left:749px;top:631px">Acabado</div>
<div class="radio" style="left:822.5px;top:632.5px"></div><div class="rl" style="left:839px;top:631px">Consumo</div>
<div class="gb" style="left:512px;top:660.5px;width:482px;height:35.5px"></div>
<div id="chk"></div>
<div class="lbl" style="left:540px;top:671.5px;font-weight:bold;font-size:11.5px">Somente Itens no Estoque ?</div>
<div class="lbl" style="left:857px;top:665px;width:141px;text-align:center;color:#e11b22;font-weight:bold;font-size:11.7px;line-height:15px">Total de Registros:<br>00005</div>

<!-- status bar -->
<div id="status">
 <span style="left:2px">[Enter] ou [Duplo Click] Carrega item</span>
 <u style="left:253px"></u>
 <svg style="left:258px" viewBox="0 0 16 16"><use href="#bino"/></svg><span style="left:282px">[F2] Trecho da Descrição</span>
 <u style="left:430px"></u>
 <svg style="left:435px" viewBox="0 0 16 16"><use href="#bino"/></svg><span style="left:459px">[F3] Trecho da Aplicação</span>
 <u style="left:606px"></u>
 <svg style="left:612px" viewBox="0 0 16 16"><use href="#bino"/></svg><span style="left:636px">[F4] Trecho de Diversos Códigos</span>
 <u style="left:828px"></u>
 <svg style="left:834px" viewBox="0 0 16 16"><use href="#bino"/></svg><span style="left:858px">[F5] Ean - Código de Barras</span>
</div>
<!-- annotations -->
<div class="or" style="left:73px;top:282px;width:194.5px;height:32.3px;border-width:4.6px"></div>
<svg class="abs" style="left:140px;top:314px;width:34px;height:302px;overflow:visible" viewBox="0 0 34 302">
 <path d="M16.5 5 V295" stroke="#f26c22" stroke-width="4.4" fill="none"/>
 <path d="M9.1 288.6 L14.2 293.6 L18.8 293.6 L24 288.6 L16.6 299.9 Z" fill="#f26c22"/>
</svg>
<div class="or" style="left:136.5px;top:620.5px;width:43.7px;height:21.5px"></div>
<div id="callout"></div>
<div class="ct" style="left:394px;top:305px;transform:scaleX(.8275)">Selecione o modo de pesquisa e em seguida</div>
<div class="ct" style="left:333px;top:341px;transform:scaleX(.8375)">digite, por exemplo, a marca para encontrar o produto</div>

<!-- caption buttons & app icon -->
<div id="capbtns">
 <div style="left:0;width:28px;background:linear-gradient(180deg,#c9d9ea 0,#a8c2dc 8px,#6f9cc6 9px,#8db6da 18px);border-right:1px solid #4a5666;box-shadow:inset 0 0 0 1px rgba(255,255,255,.35)"><i style="position:absolute;left:8px;top:9px;width:12px;height:5px;background:#fdfdfd;border:1px solid #56657a;border-radius:1px"></i></div>
 <div style="left:28px;width:27px;background:linear-gradient(180deg,#cddcec 0,#b0c8e0 8px,#7fa9d0 9px,#9cc0e0 18px);border-right:1px solid #4a5666;box-shadow:inset 0 0 0 1px rgba(255,255,255,.35)"><i style="position:absolute;left:8px;top:4px;width:11px;height:9px;border:1px solid #9aa9ba;background:rgba(255,255,255,.35);box-shadow:inset 0 0 0 2px rgba(255,255,255,.6),inset 0 0 0 3px rgba(120,140,165,.5)"></i></div>
 <div style="left:56px;width:46px;background:linear-gradient(180deg,#dfb0a4 0,#cf806e 8px,#b93a24 9px,#c24a30 13px,#d4704c 18px);box-shadow:inset 0 0 0 1px rgba(255,255,255,.3)"><svg style="position:absolute;left:15px;top:3px;width:16px;height:12px" viewBox="0 0 16 12"><path d="M1.6 1.2 H5.4 L8 3.8 L10.6 1.2 H14.4 L10.2 5.6 L14.6 10.4 H10.8 L8 7.4 L5.2 10.4 H1.4 L5.8 5.6 Z" fill="#fff" stroke="#4c2a26" stroke-width=".9" stroke-linejoin="round"/></svg></div>
</div>
<svg class="abs" style="left:8px;top:6px;width:17px;height:17px" viewBox="0 0 17 17">
 <rect x=".5" y="1.5" width="15.4" height="11.6" fill="#f6f6f6" stroke="#1a1a1a" stroke-width="1"/>
 <path d="M5 15.4 Q8.5 14 12 15.4 L12 16.4 H5 Z" fill="#222"/>
 <rect x="2" y="3" width="4" height="8.6" fill="#e8efe0"/>
 <path d="M3 4 L4.6 6 L3.4 8 L5 10.6" stroke="#9ab6d6" stroke-width=".9" fill="none"/>
 <path d="M6.6 3 H14.6 V11.6 H6.6 Z" fill="#e01010"/>
 <path d="M8.4 3 L10.6 5.4 L12.8 3 Z M6.6 7.6 L8.6 9.6 L7.4 11.6 H6.6 Z M14.6 6.4 L12.6 8 L14.6 9.6 Z" fill="#f6f6f6"/>
 <path d="M8 4.6 Q10.6 7.4 13.4 4.6 Q13.6 8.4 12.6 11 H8.4 Q7.6 8.4 8 4.6 Z" fill="#c00000"/>
</svg>

</body>
</html>
